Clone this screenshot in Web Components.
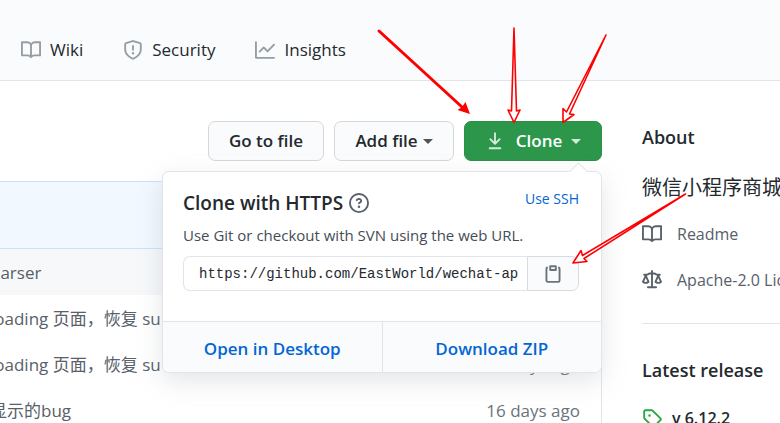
<!DOCTYPE html>
<html lang="en">
<head>
<meta charset="utf-8">
<meta name="viewport" content="width=device-width, initial-scale=1">
<title>Clone repository</title>
<style>
    html {
        overflow: hidden;
    }

    body {
        margin: 0;
        background: #fff;
        color: #24292e;
        font: 17px/24px "Open Sans", "Noto Sans CJK SC", sans-serif;
    }
</style>
</head>
<body>
<repo-page></repo-page>

<script>
"use strict";

const ICONS = {
    book: "M0 1.75A.75.75 0 01.75 1h4.253c1.227 0 2.317.59 3 1.501A3.744 3.744 0 0111.006 1h4.245a.75.75 0 01.75.75v10.5a.75.75 0 01-.75.75h-4.507a2.25 2.25 0 00-1.591.659l-.622.621a.75.75 0 01-1.06 0l-.622-.621A2.25 2.25 0 005.258 13H.75a.75.75 0 01-.75-.75V1.75zm8.755 3a2.25 2.25 0 012.25-2.25H14.5v9h-3.757c-.71 0-1.4.201-1.992.572l.004-7.322zm-1.504 7.324l.004-5.073-.002-2.253A2.25 2.25 0 005.003 2.5H1.5v9h3.757a3.75 3.75 0 011.994.574z",
    shield: "M7.467.133a1.75 1.75 0 011.066 0l5.25 1.68A1.75 1.75 0 0115 3.48V7c0 1.566-.32 3.182-1.303 4.682-.983 1.498-2.585 2.813-5.032 3.855a1.7 1.7 0 01-1.33 0c-2.447-1.042-4.049-2.357-5.032-3.855C1.32 10.182 1 8.566 1 7V3.48a1.75 1.75 0 011.217-1.667l5.25-1.68zm.61 1.429a.25.25 0 00-.153 0l-5.25 1.68a.25.25 0 00-.174.238V7c0 1.358.275 2.666 1.057 3.86.784 1.194 2.121 2.34 4.366 3.297a.2.2 0 00.154 0c2.245-.956 3.582-2.104 4.366-3.298C13.225 9.666 13.5 8.36 13.5 7V3.48a.25.25 0 00-.174-.237l-5.25-1.68zM9 10.5a1 1 0 11-2 0 1 1 0 012 0zm-.25-5.75a.75.75 0 10-1.5 0v3a.75.75 0 001.5 0v-3z",
    graph: "M1.5 1.75a.75.75 0 00-1.5 0v12.5c0 .414.336.75.75.75h14.5a.75.75 0 000-1.5H1.5V1.75zm14.28 2.53a.75.75 0 00-1.06-1.06L10 7.94 7.53 5.47a.75.75 0 00-1.06 0L3.22 8.72a.75.75 0 001.06 1.06L7 7.06l2.47 2.47a.75.75 0 001.06 0l5.25-5.25z",
    law: "M8.75.75a.75.75 0 00-1.5 0V2h-.984c-.305 0-.604.08-.869.23l-1.288.737A.25.25 0 013.984 3H1.75a.75.75 0 000 1.5h.428L.066 9.192a.75.75 0 00.154.838l.53-.53-.53.53v.001l.002.002.002.002.006.006.016.015.045.04a3.514 3.514 0 00.686.45A4.492 4.492 0 003 11c.88 0 1.556-.22 2.023-.454a3.515 3.515 0 00.686-.45l.045-.04.016-.015.006-.006.002-.002.001-.002L5.25 9.5l.53.53a.75.75 0 00.154-.838L3.822 4.5h.162c.305 0 .604-.08.869-.23l1.289-.737a.25.25 0 01.124-.033h.984V13h-2.5a.75.75 0 000 1.5h6.5a.75.75 0 000-1.5h-2.5V3.5h.984a.25.25 0 01.124.033l1.29.736c.264.152.563.231.868.231h.162l-2.112 4.692a.75.75 0 00.154.838l.53-.53-.53.53v.001l.002.002.002.002.006.006.016.015.045.04a3.517 3.517 0 00.686.45A4.492 4.492 0 0013 11c.88 0 1.556-.22 2.023-.454a3.512 3.512 0 00.686-.45l.045-.04.01-.01.006-.005.006-.006.002-.002.001-.002-.529-.531.53.53a.75.75 0 00.154-.838L13.823 4.5h.427a.75.75 0 000-1.5h-2.234a.25.25 0 01-.124-.033l-1.29-.736A1.75 1.75 0 009.735 2H8.75V.75zM1.695 9.227c.285.135.718.273 1.305.273s1.02-.138 1.305-.273L3 6.327l-1.305 2.9zm10 0c.285.135.718.273 1.305.273s1.02-.138 1.305-.273L13 6.327l-1.305 2.9z",
    tag: "M2.5 7.775V2.75a.25.25 0 01.25-.25h5.025a.25.25 0 01.177.073l6.25 6.25a.25.25 0 010 .354l-5.025 5.025a.25.25 0 01-.354 0l-6.25-6.25a.25.25 0 01-.073-.177zm-1.5 0V2.75C1 1.784 1.784 1 2.75 1h5.025c.464 0 .91.184 1.238.513l6.25 6.25a1.75 1.75 0 010 2.474l-5.026 5.026a1.75 1.75 0 01-2.474 0l-6.25-6.25A1.75 1.75 0 011 7.775zM6 5a1 1 0 100 2 1 1 0 000-2z",
    question: "M8 1.5a6.5 6.5 0 100 13 6.5 6.5 0 000-13zM0 8a8 8 0 1116 0A8 8 0 010 8zm9 3a1 1 0 11-2 0 1 1 0 012 0zM6.92 6.085c.081-.16.19-.299.34-.398.145-.097.371-.187.74-.187.28 0 .553.087.738.225A.613.613 0 019 6.25c0 .177-.04.264-.077.318a.956.956 0 01-.277.245c-.076.051-.158.1-.258.161l-.007.004a7.728 7.728 0 00-.313.195 2.416 2.416 0 00-.692.661.75.75 0 001.248.832.956.956 0 01.276-.245 6.3 6.3 0 01.26-.16l.006-.004c.093-.057.204-.123.313-.195.222-.149.487-.355.692-.662.214-.32.329-.702.329-1.15 0-.76-.36-1.348-.863-1.725A2.76 2.76 0 008 4c-.631 0-1.155.16-1.572.438-.413.276-.68.638-.849.977a.75.75 0 101.342.67z",
    clippy: "M5.75 1a.75.75 0 00-.75.75v3c0 .414.336.75.75.75h4.5a.75.75 0 00.75-.75v-3a.75.75 0 00-.75-.75h-4.5zm.75 3V2.5h3V4h-3zm-2.874-.467a.75.75 0 00-.752-1.298A1.75 1.75 0 002 3.75v9.5c0 .966.784 1.75 1.75 1.75h8.5A1.75 1.75 0 0014 13.25v-9.5a1.75 1.75 0 00-.874-1.515.75.75 0 10-.752 1.298.25.25 0 01.126.217v9.5a.25.25 0 01-.25.25h-8.5a.25.25 0 01-.25-.25v-9.5a.25.25 0 01.126-.217z",
    download: "M7.47 10.78a.75.75 0 001.06 0l3.75-3.75a.75.75 0 00-1.06-1.06L8.75 8.44V1.75a.75.75 0 00-1.5 0v6.69L4.78 5.97a.75.75 0 00-1.06 1.06l3.75 3.75zM3.75 13a.75.75 0 000 1.5h8.5a.75.75 0 000-1.5h-8.5z"
};

// every element below only differs in its markup
class BaseElement extends HTMLElement {
    constructor() {
        super();
        this.attachShadow({ mode: "open" });
    }
    connectedCallback() {
        this.shadowRoot.innerHTML = this.html;
    }
}

class OctIcon extends BaseElement {
    get html() {
        return `
            <style>
                :host {
                    display: block;
                    flex: none;
                    width: 20px;
                    height: 20px;
                }
                svg {
                    display: block;
                    width: 100%;
                    height: 100%;
                    fill: currentColor;
                }
            </style>
            <svg viewBox="0 0 16 16" aria-hidden="true"><path fill-rule="evenodd" d="${ICONS[this.getAttribute("name")]}"/></svg>
        `;
    }
}

class NavTab extends BaseElement {
    get html() {
        return `
            <style>
                :host {
                    display: block;
                }
                a {
                    display: flex;
                    align-items: center;
                    gap: 9px;
                    color: #24292e;
                    text-decoration: none;
                }
                oct-icon {
                    color: #959da5;
                }
            </style>
            <a href="#"><oct-icon name="${this.getAttribute("icon")}"></oct-icon><slot></slot></a>
        `;
    }
}

class RepoNav extends BaseElement {
    get html() {
        return `
            <style>
                :host {
                    display: block;
                    background: #fafbfc;
                    border-bottom: 1px solid #e1e4e8;
                }
                nav {
                    display: flex;
                    gap: 40px;
                    padding: 38px 21px 18px;
                }
            </style>
            <nav>
                <nav-tab icon="book">Wiki</nav-tab>
                <nav-tab icon="shield">Security</nav-tab>
                <nav-tab icon="graph">Insights</nav-tab>
            </nav>
        `;
    }
}

class ActionButton extends BaseElement {
    get html() {
        const caret = this.hasAttribute("caret") ? `<span class="caret"></span>` : "";
        return `
            <style>
                :host {
                    display: block;
                }
                button {
                    display: flex;
                    align-items: center;
                    justify-content: center;
                    gap: 5px;
                    width: 100%;
                    height: 40px;
                    padding: 0 20px;
                    border: 1px solid #d5d8da;
                    border-radius: 7px;
                    background: #fafbfc;
                    color: #24292e;
                    font: inherit;
                    font-weight: 600;
                    white-space: nowrap;
                }
                .caret {
                    border: 5px solid transparent;
                    border-top-color: currentColor;
                    border-bottom: 0;
                    opacity: .8;
                }
                :host([primary]) button {
                    gap: 9px;
                    border-color: #2a8f47;
                    background: #2c974b;
                    color: #fff;
                }
                ::slotted(oct-icon) {
                    margin-right: 2px;
                    opacity: .8;
                }
            </style>
            <button type="button"><slot></slot>${caret}</button>
        `;
    }
}

class ClonePopover extends BaseElement {
    get html() {
        return `
            <style>
                :host {
                    display: block;
                    box-sizing: border-box;
                    width: 440px;
                    border: 1px solid #e1e4e8;
                    border-radius: 7px;
                    background: #fff;
                    box-shadow: 0 8px 24px rgba(149, 157, 165, .25);
                }
                /* small pointer towards the clone button */
                :host::before {
                    content: "";
                    position: absolute;
                    top: -7px;
                    right: 16px;
                    width: 12px;
                    height: 12px;
                    border: 1px solid #e1e4e8;
                    border-width: 1px 0 0 1px;
                    background: #fff;
                    transform: rotate(45deg);
                }
                .body {
                    padding: 15px 22px 30px 20px;
                }
                header {
                    display: flex;
                    justify-content: space-between;
                }
                h2 {
                    display: flex;
                    align-items: center;
                    gap: 6px;
                    margin: 0;
                    font-size: 19px;
                    font-weight: 600;
                    line-height: 32px;
                }
                h2 oct-icon {
                    color: #586069;
                }
                a {
                    color: #0366d6;
                    text-decoration: none;
                }
                header a {
                    font-size: 14px;
                    line-height: 24px;
                }
                p {
                    margin: 4px 0 9px;
                    font-size: 15px;
                    color: #444d56;
                }
                .url {
                    display: flex;
                    height: 35px;
                }
                input {
                    flex: 1;
                    min-width: 0;
                    box-sizing: border-box;
                    padding: 0 8px 0 15px;
                    border: 1px solid #e1e4e8;
                    border-right: 0;
                    border-radius: 7px 0 0 7px;
                    background: #fff;
                    color: #24292e;
                    font: 14px "Liberation Mono", monospace;
                }
                .url button {
                    display: flex;
                    align-items: center;
                    justify-content: center;
                    width: 52px;
                    padding: 0;
                    border: 1px solid #d8dbde;
                    border-radius: 0 7px 7px 0;
                    background: #fafbfc;
                    color: #6a737d;
                }
                footer {
                    display: flex;
                    border-top: 1px solid #e1e4e8;
                    border-radius: 0 0 7px 7px;
                    background: #fafbfc;
                }
                footer a {
                    flex: 1;
                    padding: 15px 0 11px;
                    text-align: center;
                    font-weight: 600;
                }
                footer a + a {
                    border-left: 1px solid #e1e4e8;
                }
            </style>
            <div class="body">
                <header>
                    <h2>Clone with HTTPS <oct-icon name="question"></oct-icon></h2>
                    <a href="#">Use SSH</a>
                </header>
                <p>Use Git or checkout with SVN using the web URL.</p>
                <div class="url">
                    <input type="text" readonly aria-label="Clone URL" value="https://github.com/EastWorld/wechat-ap">
                    <button type="button" aria-label="Copy URL"><oct-icon name="clippy"></oct-icon></button>
                </div>
            </div>
            <footer>
                <a href="#">Open in Desktop</a>
                <a href="#">Download ZIP</a>
            </footer>
        `;
    }
}

class FileToolbar extends BaseElement {
    get html() {
        return `
            <style>
                :host {
                    display: flex;
                    justify-content: flex-end;
                    gap: 10px;
                    position: relative;
                }
                .go {
                    width: 116px;
                }
                .add {
                    width: 120px;
                }
                .clone {
                    width: 138px;
                }
                clone-popover {
                    position: absolute;
                    z-index: 1;
                    top: 50px;
                    right: 0;
                }
            </style>
            <action-button class="go">Go to file</action-button>
            <action-button class="add" caret>Add file</action-button>
            <action-button class="clone" primary caret><oct-icon name="download"></oct-icon>Clone</action-button>
            <clone-popover></clone-popover>
        `;
    }
}

class FileList extends BaseElement {
    get html() {
        return `
            <style>
                :host {
                    display: block;
                    border-right: 1px solid #e1e4e8;
                }
                .commit {
                    height: 66px;
                    border: 1px solid #c8e1ff;
                    border-width: 1px 0;
                    background: #f1f8ff;
                }
                table {
                    width: 100%;
                    border-collapse: collapse;
                    color: #586069;
                }
                td {
                    height: 45px;
                    padding: 1px 0 0;
                    white-space: nowrap;
                }
                tr.path {
                    background: #f6f8fa;
                }
                /* names run out past the left side of the window */
                .message {
                    display: block;
                    margin-left: -10px;
                }
                .age {
                    padding-right: 21px;
                    color: #6a737d;
                    text-align: right;
                }
            </style>
            <div class="commit"></div>
            <table>
                <tr class="path"><td><span class="message">parser</span></td><td></td></tr>
                <tr><td><span class="message">loading 页面，恢复 su</span></td><td class="age"></td></tr>
                <tr><td><span class="message">loading 页面，恢复 su</span></td><td class="age">16 days ago</td></tr>
                <tr><td><span class="message">显示的bug</span></td><td class="age">16 days ago</td></tr>
            </table>
        `;
    }
}

class RepoAbout extends BaseElement {
    get html() {
        return `
            <style>
                :host {
                    display: block;
                    white-space: nowrap;
                }
                h2 {
                    margin: 0;
                    font-size: 18px;
                    font-weight: 600;
                    line-height: 32px;
                }
                p {
                    margin: 18px 0 16px;
                    font-size: 20px;
                    line-height: 34px;
                }
                a {
                    display: flex;
                    align-items: center;
                    gap: 15px;
                    height: 26px;
                    margin-bottom: 20px;
                    color: #586069;
                    font-size: 16px;
                    text-decoration: none;
                }
                hr {
                    margin: 0 0 30px;
                    border: 0;
                    border-top: 1px solid #e1e4e8;
                }
                .about {
                    padding-bottom: 10px;
                }
                .release {
                    gap: 10px;
                    margin: 19px 0 0;
                    color: #24292e;
                    font-weight: 600;
                }
                .release oct-icon {
                    color: #28a745;
                }
            </style>
            <section class="about">
                <h2>About</h2>
                <p>微信小程序商城</p>
                <a href="#"><oct-icon name="book"></oct-icon>Readme</a>
                <a href="#"><oct-icon name="law"></oct-icon>Apache-2.0 License</a>
            </section>
            <hr>
            <section>
                <h2>Latest release</h2>
                <a class="release" href="#"><oct-icon name="tag"></oct-icon>v 6.12.2</a>
            </section>
        `;
    }
}

class ArrowMarks extends BaseElement {
    get html() {
        return `
            <style>
                :host {
                    display: block;
                    pointer-events: none;
                }
                svg {
                    display: block;
                }
            </style>
            <svg width="780" height="423" viewBox="0 0 780 423" fill="none" stroke="#f00" aria-hidden="true">
                <path stroke-width="3" stroke-linecap="round" d="M379 31L462 107"/>
                <path fill="#f00" stroke="none" d="M470 114L457.500 110L462 107L465.500 102Z"/>
                <path fill="#fff" fill-opacity=".6" stroke-width="1.600" stroke-linejoin="round" d="M514 28L511.500 111L508 110L514 122.500L520 110L516.500 111Z"/>
                <path stroke-width="1.600" stroke-linejoin="round" d="M606 35L566.500 112L563 108.500V122.500L574 114.500L569.500 114Z"/>
                <path fill="#fff" fill-opacity=".6" stroke-width="1.600" stroke-linejoin="round" d="M685.500 194L582.500 255.500L581 250.500L573 263L587 261.500L584 258.500Z"/>
            </svg>
        `;
    }
}

class RepoPage extends BaseElement {
    get html() {
        return `
            <style>
                :host {
                    display: block;
                    position: relative;
                    height: 100vh;
                    overflow: hidden;
                }
                main {
                    display: grid;
                    grid-template-columns: minmax(0, 1fr) 138px;
                    gap: 40px;
                    padding-top: 40px;
                }
                file-list {
                    margin-top: 20px;
                }
                arrow-marks {
                    position: absolute;
                    z-index: 2;
                    top: 0;
                    left: 0;
                }
            </style>
            <repo-nav></repo-nav>
            <main>
                <div>
                    <file-toolbar></file-toolbar>
                    <file-list></file-list>
                </div>
                <repo-about></repo-about>
            </main>
            <arrow-marks></arrow-marks>
        `;
    }
}

customElements.define("oct-icon", OctIcon);
customElements.define("nav-tab", NavTab);
customElements.define("repo-nav", RepoNav);
customElements.define("action-button", ActionButton);
customElements.define("clone-popover", ClonePopover);
customElements.define("file-toolbar", FileToolbar);
customElements.define("file-list", FileList);
customElements.define("repo-about", RepoAbout);
customElements.define("arrow-marks", ArrowMarks);
customElements.define("repo-page", RepoPage);
</script>
</body>
</html>
